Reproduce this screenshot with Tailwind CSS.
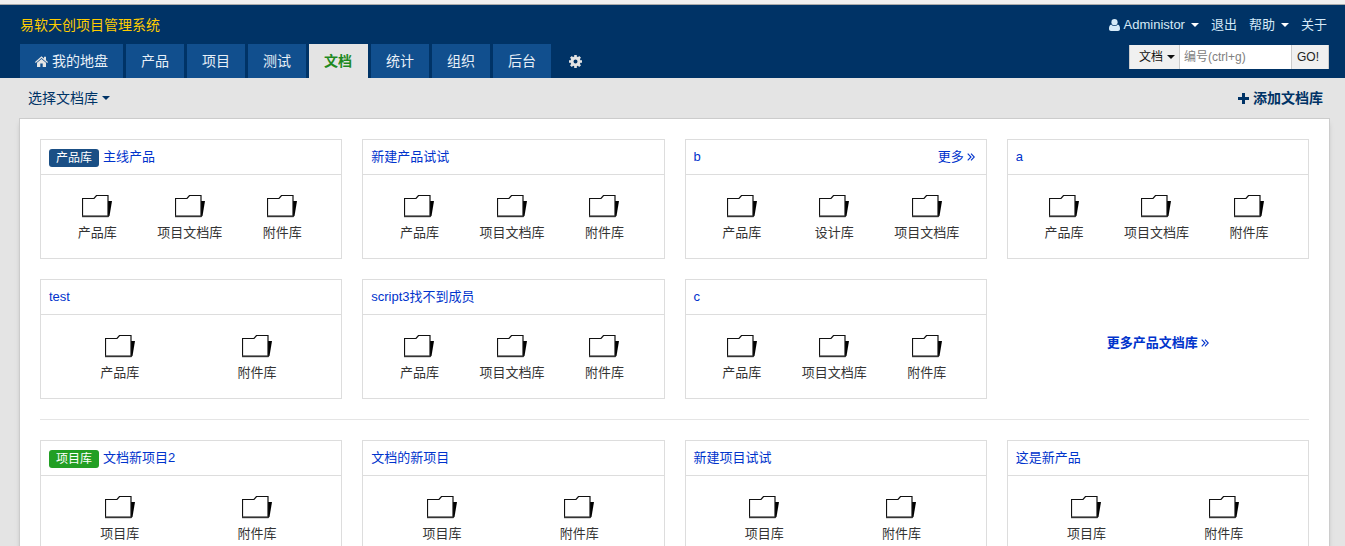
<!DOCTYPE html>
<html lang="zh-CN">
<head>
    <meta charset="UTF-8">
    <meta name="viewport" content="width=device-width, initial-scale=1.0">
    <title>文档 - 易软天创项目管理系统</title>
    <script src="https://cdn.jsdelivr.net/npm/@tailwindcss/browser@4"></script>
</head>
<body class="border-t-4 border-[#f0f0f0] bg-[#e4e4e4] font-['Liberation_Sans','Noto_Sans_CJK_SC',sans-serif] text-[13px] leading-5 text-[#333]">
    <!-- Shared icons -->
    <svg class="hidden">
        <symbol id="folder" viewBox="0 0 30 23">
            <path d="M26 6H30L27.500 21L25 22Z" fill="#000"/>
            <path d="M.5 3.500H12L14.500 .5H26V21.500H.5Z" fill="#fff" stroke="#111" stroke-width="1.200"/>
            <path d="M0 21.300H26.500" stroke="#333" stroke-width="1.800"/>
        </symbol>
        <symbol id="angles" viewBox="0 0 8 8">
            <path d="M.7 .7L4 4L.7 7.300M4 .7L7.300 4L4 7.300" fill="none" stroke="currentColor" stroke-width="1.100"/>
        </symbol>
        <symbol id="caret" viewBox="0 0 8 4">
            <path d="M0 0H8L4 4Z" fill="currentColor"/>
        </symbol>
    </svg>

    <header class="border-t border-[#aaa] bg-[#003366] pl-5 pr-4">
        <div class="flex h-[39px] items-center justify-between">
            <h1 class="text-sm text-[#ffcc00]">易软天创项目管理系统</h1>
            <div class="flex items-center gap-3 pr-0.5 text-[#d5eaf8]">
                <button class="flex items-center">
                    <svg class="mr-1 h-3 w-[11px]" viewBox="0 0 11 12" fill="currentColor"><circle cx="5.500" cy="3.200" r="3.100"/><path d="M2.300 5.500C.6 6 0 7.500 0 9.800C0 11.300.8 12 2 12H9C10.200 12 11 11.300 11 9.800C11 7.500 10.400 6 8.700 5.500C7 7.500 4 7.500 2.300 5.500Z"/></svg>
                    Administor
                    <svg class="ml-1.5 h-1 w-2 text-white"><use href="#caret"/></svg>
                </button>
                <a href="#">退出</a>
                <button class="flex items-center">帮助<svg class="ml-1.5 h-1 w-2 text-white"><use href="#caret"/></svg></button>
                <a href="#">关于</a>
            </div>
        </div>
        <div class="flex items-start justify-between">
            <nav class="flex gap-[3px] text-sm text-[#e8f0f8]">
                <a href="#" class="flex h-[34px] items-center bg-[#114f8e] px-[15px]">
                    <svg class="mr-1 h-[11px] w-[13px] text-[#e4e4e4]" viewBox="0 0 13 11" fill="currentColor"><path d="M0 6L6.500 .3L9 2.500V.8H11V4.200L13 6L12.300 6.900L6.500 1.900L.7 6.900Z"/><path d="M2 6.700L6.500 2.900L11 6.700V11H7.700V7.500H5.300V11H2Z"/></svg>我的地盘</a>
                <a href="#" class="flex h-[34px] items-center bg-[#114f8e] px-[15px]">产品</a>
                <a href="#" class="flex h-[34px] items-center bg-[#114f8e] px-[15px]">项目</a>
                <a href="#" class="flex h-[34px] items-center bg-[#114f8e] px-[15px]">测试</a>
                <a href="#" class="flex h-[34px] min-w-[59px] items-center bg-[#e4e4e4] px-[15px] font-bold text-[#1f8a1f]">文档</a>
                <a href="#" class="flex h-[34px] items-center bg-[#114f8e] px-[15px]">统计</a>
                <a href="#" class="flex h-[34px] items-center bg-[#114f8e] px-[15px]">组织</a>
                <a href="#" class="flex h-[34px] items-center bg-[#114f8e] px-[15px]">后台</a>
                <a href="#" aria-label="设置" class="flex h-[34px] items-center px-[15px]">
                    <svg class="h-[13px] w-[13px] text-[#e4e4e4]" viewBox="0 0 13 13"><circle cx="6.500" cy="6.500" r="3.500" fill="none" stroke="currentColor" stroke-width="3"/><path d="M6.500 0V2.500M6.500 10.500V13M0 6.500H2.500M10.500 6.500H13M1.900 1.900L3.500 3.500M9.500 9.500L11.100 11.100M11.100 1.900L9.500 3.500M3.500 9.500L1.900 11.100" stroke="currentColor" stroke-width="2.600"/></svg>
                </a>
            </nav>
            <form class="mt-px flex h-6 text-xs">
                <div class="relative flex">
                    <select aria-label="搜索范围" class="w-[50px] appearance-none border-l border-[#ccc] bg-[#f0f0f0] pl-[9px] text-[#111]">
                        <option>文档</option>
                        <option>产品</option>
                        <option>项目</option>
                    </select>
                    <svg class="pointer-events-none absolute right-1 top-[10px] h-1 w-2 text-[#111]"><use href="#caret"/></svg>
                </div>
                <input type="text" aria-label="编号" placeholder="编号(ctrl+g)" class="w-[112px] border-l border-[#ccc] bg-white px-1 placeholder:text-[#808080]">
                <button type="submit" class="w-[38px] border-x border-[#ccc] bg-[#f0f0f0] pr-1 text-[#222]">GO!</button>
            </form>
        </div>
    </header>

    <div class="flex h-10 items-center justify-between pl-7 pr-[22px] text-sm text-[#003366]">
        <button class="flex items-center">选择文档库<svg class="ml-1 h-1 w-2"><use href="#caret"/></svg></button>
        <a href="#" class="flex items-center font-bold">
            <svg class="mr-1 h-[11px] w-[11px]" viewBox="0 0 11 11"><path d="M5.500 0V11M0 5.500H11" stroke="currentColor" stroke-width="3"/></svg>添加文档库</a>
    </div>

    <main class="ml-[19px] mr-[15px] border border-[#ccc] bg-white p-5 shadow-md">
        <section id="products" class="grid grid-cols-4 gap-5"></section>
        <hr class="my-5 border-[#e5e5e5]">
        <section id="projects" class="grid grid-cols-4 gap-5"></section>
    </main>

    <script>
        const products = [
            { name: '主线产品', badge: '产品库', libs: ['产品库', '项目文档库', '附件库'] },
            { name: '新建产品试试', libs: ['产品库', '项目文档库', '附件库'] },
            { name: 'b', more: true, libs: ['产品库', '设计库', '项目文档库'] },
            { name: 'a', libs: ['产品库', '项目文档库', '附件库'] },
            { name: 'test', libs: ['产品库', '附件库'] },
            { name: 'script3找不到成员', libs: ['产品库', '项目文档库', '附件库'] },
            { name: 'c', libs: ['产品库', '项目文档库', '附件库'] }
        ];
        const projects = [
            { name: '文档新项目2', badge: '项目库', libs: ['项目库', '附件库'] },
            { name: '文档的新项目', libs: ['项目库', '附件库'] },
            { name: '新建项目试试', libs: ['项目库', '附件库'] },
            { name: '这是新产品', libs: ['项目库', '附件库'] }
        ];

        function card(item, badgeColor) {
            const badge = item.badge ? `<span class="mr-1 mt-0.5 h-[18px] rounded-[3px] px-[7px] text-xs leading-[18px] text-white ${badgeColor}">${item.badge}</span>` : '';
            const more = item.more ? `<a href="#" class="ml-auto mr-[3px] flex items-center">更多<svg class="ml-[3px] h-2 w-2"><use href="#angles"/></svg></a>` : '';
            // two folders spread wider than three
            const width = item.libs.length === 2 ? 'w-[49%]' : 'w-[33%]';
            const libs = item.libs.map(lib => `
                <a href="#" class="flex flex-col items-center ${width}">
                    <svg class="h-[23px] w-[30px]"><use href="#folder"/></svg>
                    <span class="mt-[5px]">${lib}</span>
                </a>`).join('');
            return `
                <div class="border border-[#ddd]">
                    <div class="flex h-[35px] items-center border-b border-[#ddd] px-2 text-[#0033cc]">${badge}<a href="#">${item.name}</a>${more}</div>
                    <div class="flex h-[83px] px-2.5 pt-5">${libs}</div>
                </div>`;
        }

        document.getElementById('products').innerHTML = products.map(p => card(p, 'bg-[#1a4f85]')).join('') +
            `<a href="#" class="flex items-center justify-center pt-2 font-bold text-[#0033cc]">更多产品文档库<svg class="ml-[3px] h-2 w-2"><use href="#angles"/></svg></a>`;
        document.getElementById('projects').innerHTML = projects.map(p => card(p, 'bg-[#229f24]')).join('');
    </script>
</body>
</html>
